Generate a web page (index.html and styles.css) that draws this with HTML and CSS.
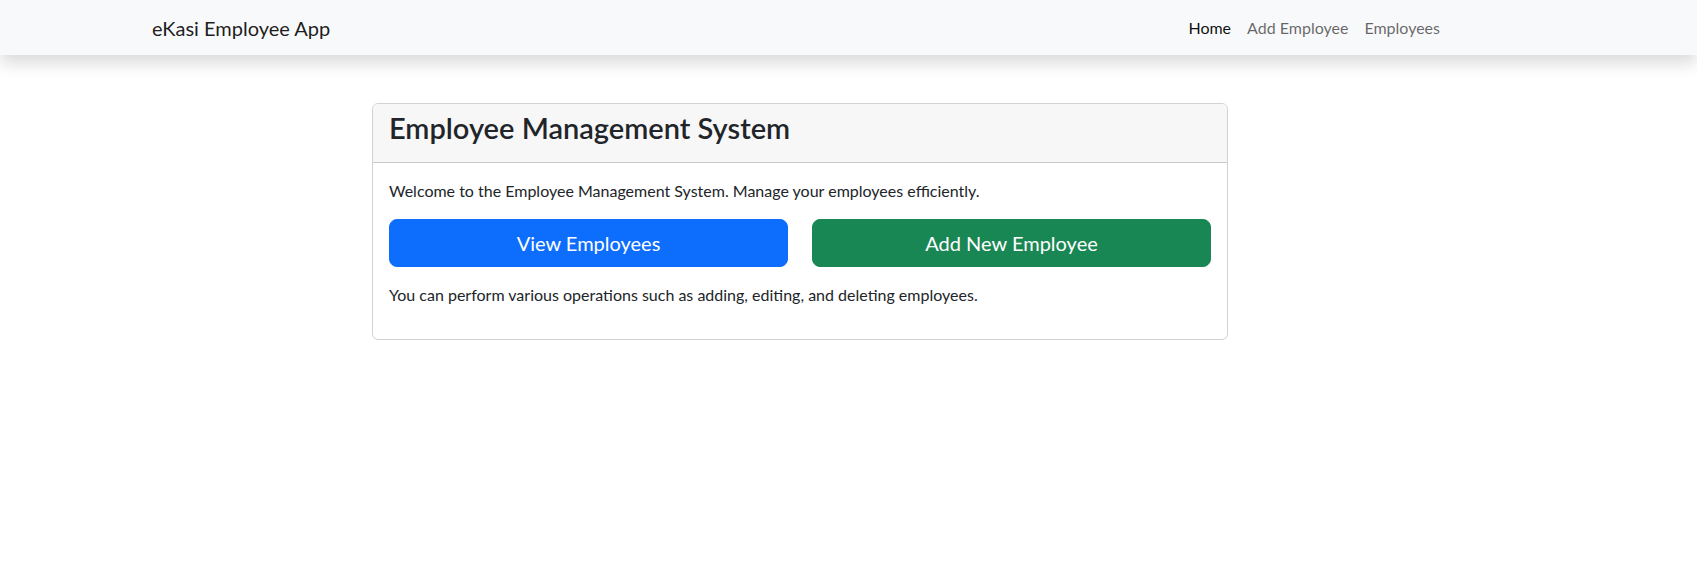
FILE: index.html
```html
<!DOCTYPE html>
<html lang="en">
<head>
<meta charset="utf-8">
<title>eKasi Employee App</title>
<link rel="stylesheet" href="styles.css">
</head>
<body>
  <nav class="navbar">
    <div class="container nav-inner">
      <a class="brand" href="#">eKasi Employee App</a>
      <ul class="nav-links">
        <li><a class="nav-link active" href="#">Home</a></li>
        <li><a class="nav-link" href="#">Add Employee</a></li>
        <li><a class="nav-link" href="#">Employees</a></li>
      </ul>
    </div>
  </nav>
  <main class="container">
    <div class="card">
      <div class="card-header">
        <h2 class="card-title">Employee Management System</h2>
      </div>
      <div class="card-body">
        <p class="text">Welcome to the Employee Management System. Manage your employees efficiently.</p>
        <div class="btn-row">
          <a class="btn btn-primary" href="#">View Employees</a>
          <a class="btn btn-success" href="#">Add New Employee</a>
        </div>
        <p class="text">You can perform various operations such as adding, editing, and deleting employees.</p>
      </div>
    </div>
  </main>
</body>
</html>
```

FILE: styles.css
```css
* { box-sizing: border-box; }
html, body {
  margin: 0;
  padding: 0;
  background: #fff;
}
body {
  font-family: "Lato", "Open Sans", "Liberation Sans", sans-serif;
  font-size: 16px;
  line-height: 1.5;
  color: #212529;
}
.container {
  width: 1320px;
  margin: 0 0 0 140px;
  padding: 0 12px;
}
.navbar {
  background: #f8f9fa;
  padding: 7.5px 0;
  box-shadow: 0 8px 16px rgba(0, 0, 0, 0.15);
  position: relative;
}
.nav-inner {
  display: flex;
  align-items: center;
  justify-content: space-between;
}
.brand {
  font-size: 20px;
  line-height: 30px;
  padding: 5px 0;
  color: rgba(0, 0, 0, 0.9);
  text-decoration: none;
}
.nav-links {
  display: flex;
  list-style: none;
  margin: 0;
  padding: 0;
}
.nav-link {
  display: block;
  padding: 8px;
  color: rgba(0, 0, 0, 0.6);
  text-decoration: none;
  line-height: 24px;
}
.nav-link.active {
  color: rgba(0, 0, 0, 0.95);
}
.card {
  width: 856px;
  margin: 48px 0 0 220px;
  border: 1px solid rgba(0, 0, 0, 0.175);
  border-radius: 6px;
  overflow: hidden;
}
.card-header {
  background: #f7f7f7;
  border-bottom: 1px solid rgba(0, 0, 0, 0.175);
  padding: 5px 16px 15px;
}
.card-title {
  margin: 0;
  font-size: 29px;
  font-weight: 600;
  line-height: 38px;
  color: #212529;
}
.card-body {
  padding: 16px;
}
.text {
  margin: 0 0 16px;
}
.btn-row {
  display: grid;
  grid-template-columns: 1fr 1fr;
  gap: 24px;
  margin-bottom: 16px;
}
.btn {
  display: block;
  text-align: center;
  font-size: 20px;
  line-height: 30px;
  padding: 8px 16px;
  border: 1px solid transparent;
  border-radius: 8px;
  color: #fff;
  text-decoration: none;
}
.btn-primary {
  background: #0d6efd;
  border-color: #0d6efd;
}
.btn-success {
  background: #198754;
  border-color: #198754;
}
```
